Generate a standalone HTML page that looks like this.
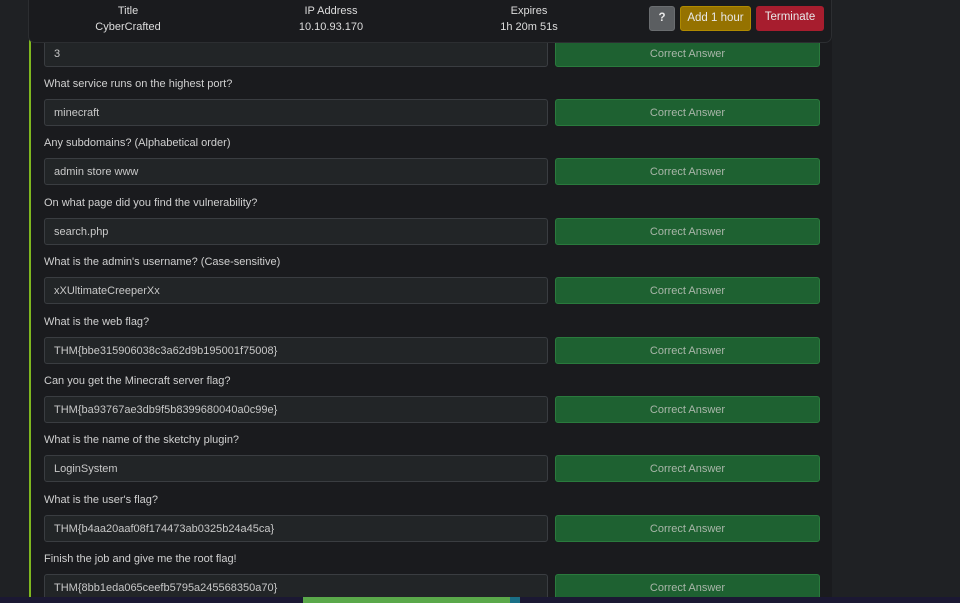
<!DOCTYPE html>
<html><head><meta charset="utf-8"><style>
*{box-sizing:border-box;margin:0;padding:0}
body{width:960px;height:603px;overflow:hidden;background:#1f2124;font-family:"Liberation Sans",sans-serif;position:relative}
.card{position:absolute;left:29px;top:0;width:803px;height:597px;background:#1a1b1e;border-left:2px solid #7fb71f}
.hdr{position:absolute;left:28px;top:0;width:804px;height:43px;background:#1a1b1e;border:1px solid #2c2e31;border-top:none;border-radius:0 0 7px 7px;z-index:3}
.col{position:absolute;top:3px;text-align:center;color:#ddd;font-size:11px;line-height:16px;width:160px}
.btn{position:absolute;top:6px;height:25px;border-radius:3px;font-size:11.5px;line-height:23px;text-align:center;color:#e8e8e8}
.lbl{position:absolute;left:44px;color:#d0d0d0;font-size:11px;line-height:14px}
.inp{position:absolute;left:44px;width:504px;height:27px;background:#222527;border:1px solid #3a3d41;border-radius:3px;color:#c8c8c8;font-size:11px;line-height:26px;padding-left:9px}
.ca{position:absolute;left:555px;width:265px;height:27px;background:#1e6131;border:1px solid #2a7a3d;border-radius:3px;color:#a9b6a9;font-size:11px;line-height:26px;text-align:center}
.bot{position:absolute;left:0;top:597px;width:960px;height:6px;background:#1b1833}
</style></head><body>
<div class="card"></div>
<div class="hdr">
<div class="col" style="left:19px">Title<br>CyberCrafted</div>
<div class="col" style="left:222px">IP Address<br>10.10.93.170</div>
<div class="col" style="left:420px">Expires<br>1h 20m 51s</div>
<div class="btn" style="left:620px;width:26px;background:#5b5e61;border:1px solid #6a6d70;font-weight:bold">?</div>
<div class="btn" style="left:651px;width:71px;background:#957200;border:1px solid #b08a00">Add 1 hour</div>
<div class="btn" style="left:727px;width:68px;background:#a71d2e">Terminate</div>
</div>
<div class="inp" style="top:40px">3</div><div class="ca" style="top:40px">Correct Answer</div>
<div class="lbl" style="top:77px">What service runs on the highest port?</div>
<div class="inp" style="top:99px">minecraft</div><div class="ca" style="top:99px">Correct Answer</div>
<div class="lbl" style="top:136px">Any subdomains? (Alphabetical order)</div>
<div class="inp" style="top:158px">admin store www</div><div class="ca" style="top:158px">Correct Answer</div>
<div class="lbl" style="top:196px">On what page did you find the vulnerability?</div>
<div class="inp" style="top:218px">search.php</div><div class="ca" style="top:218px">Correct Answer</div>
<div class="lbl" style="top:255px">What is the admin's username? (Case-sensitive)</div>
<div class="inp" style="top:277px">xXUltimateCreeperXx</div><div class="ca" style="top:277px">Correct Answer</div>
<div class="lbl" style="top:315px">What is the web flag?</div>
<div class="inp" style="top:337px">THM{bbe315906038c3a62d9b195001f75008}</div><div class="ca" style="top:337px">Correct Answer</div>
<div class="lbl" style="top:374px">Can you get the Minecraft server flag?</div>
<div class="inp" style="top:396px">THM{ba93767ae3db9f5b8399680040a0c99e}</div><div class="ca" style="top:396px">Correct Answer</div>
<div class="lbl" style="top:433px">What is the name of the sketchy plugin?</div>
<div class="inp" style="top:455px">LoginSystem</div><div class="ca" style="top:455px">Correct Answer</div>
<div class="lbl" style="top:493px">What is the user's flag?</div>
<div class="inp" style="top:515px">THM{b4aa20aaf08f174473ab0325b24a45ca}</div><div class="ca" style="top:515px">Correct Answer</div>
<div class="lbl" style="top:552px">Finish the job and give me the root flag!</div>
<div class="inp" style="top:574px">THM{8bb1eda065ceefb5795a245568350a70}</div><div class="ca" style="top:574px">Correct Answer</div>
<div class="bot"><div style="position:absolute;left:303px;width:207px;height:6px;background:#5aa84a"></div><div style="position:absolute;left:510px;width:10px;height:6px;background:#1a6f86"></div></div>
</body></html>
